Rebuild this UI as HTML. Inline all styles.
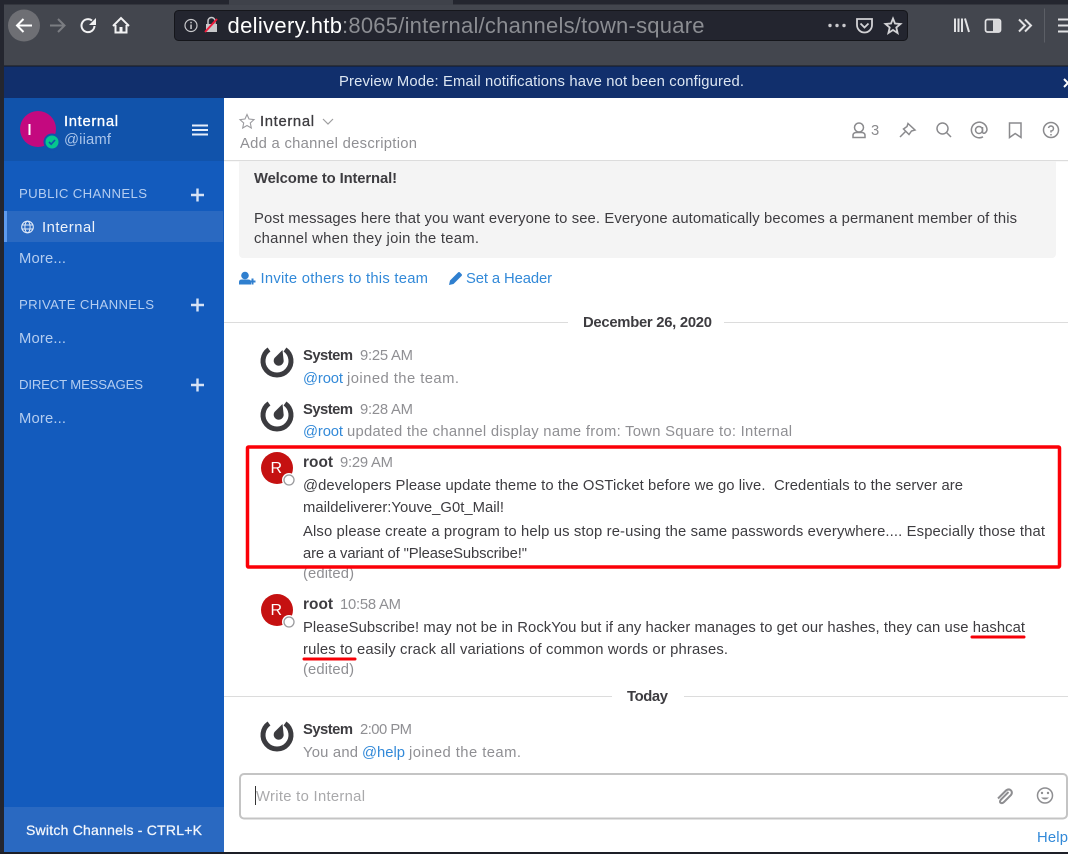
<!DOCTYPE html>
<html><head><meta charset="utf-8"><title>Internal</title>
<style>
html,body{margin:0;padding:0;background:#fff;width:1068px;height:854px;overflow:hidden}
svg{display:block}
text{font-family:"Liberation Sans",sans-serif;font-size:14.8px;white-space:pre}
.b{font-weight:700}
.t{fill:#3d3c40}
.g{fill:#8f8f93}
.l{fill:#3289d8}
.s{fill:#b4cdf0}
.h{font-size:13.2px}
</style></head><body>
<svg xmlns="http://www.w3.org/2000/svg" width="1068" height="854" viewBox="0 0 1068 854">
<defs>
<g id="mm"><path d="M-8 -11.500A14 14 0 1 0 8 -11.500" fill="none" stroke="#3b3b3f" stroke-width="5"/><path d="M5.500 -11L6.700 0A5 5 0 1 1 -2.500 -3Z" fill="#3b3b3f"/></g>
<g id="ro"><circle r="16" fill="#c51111"/><text x="-6.500" y="5" fill="#fff" style="font-size:16px">R</text><circle cx="12" cy="12" r="7" fill="#fff"/><circle cx="12" cy="12" r="5" fill="#fff" stroke="#9a9a9d" stroke-width="1.300"/></g>
</defs>

<!-- browser chrome -->
<rect width="1068" height="66" fill="#43464e"/>
<rect width="1068" height="4.500" fill="#24262f"/>
<rect x="229" width="224" height="5" fill="#3f424a"/>
<rect y="66" width="1068" height="32" fill="#112f6c"/>
<rect y="65.500" width="1068" height="1" fill="#16181e"/>
<rect x="0" y="0" width="4" height="854" fill="#24262f"/>
<circle cx="24" cy="25.500" r="16" fill="#6e6f74"/>
<path d="M32 25.500H17M23.500 19L17 25.500L23.500 32" fill="none" stroke="#fff" stroke-width="2"/>
<path d="M50 25.500H64M58 19L64.500 25.500L58 32" fill="none" stroke="#7b7d82" stroke-width="2"/>
<path d="M94.500 26A6.500 6.500 0 1 1 92 20.500" fill="none" stroke="#f2f2f3" stroke-width="2"/><path d="M96 18V25H89Z" fill="#f2f2f3"/>
<path d="M113 26L121 18L129 26M115.500 25V32.500H126.500V25" fill="none" stroke="#f2f2f3" stroke-width="2"/><rect x="119.500" y="27" width="3" height="5" fill="#f2f2f3"/>
<rect x="174.500" y="10.500" width="733" height="30" rx="4" fill="#23252f" stroke="#15161b"/>
<circle cx="191" cy="25.500" r="6" fill="none" stroke="#c9c9cc" stroke-width="1.200"/><rect x="190.300" y="24.500" width="1.500" height="4.500" fill="#c9c9cc"/><rect x="190.300" y="21.800" width="1.500" height="1.500" fill="#c9c9cc"/>
<rect x="206" y="24" width="11" height="8" fill="#c8c8cb"/><path d="M208 24V21A3.500 3.500 0 0 1 215 21V24" fill="none" stroke="#c8c8cb" stroke-width="1.500"/><path d="M205 32L217 19" stroke="#ee1c3c" stroke-width="2"/>
<text x="227.500" y="33" fill="#fff" textLength="114.500" style="font-size:22px">delivery.htb</text>
<text x="342" y="33" fill="#8b8d92" textLength="362.500" style="font-size:22px">:8065/internal/channels/town-square</text>
<circle cx="830" cy="25.500" r="1.700" fill="#c9c9cc"/><circle cx="837" cy="25.500" r="1.700" fill="#c9c9cc"/><circle cx="844" cy="25.500" r="1.700" fill="#c9c9cc"/>
<path d="M857 19H872V25A7.500 7.500 0 0 1 857 25Z" fill="none" stroke="#d2d2d5" stroke-width="1.800"/><path d="M860.500 23.500L864.500 27.500L868.500 23.500" fill="none" stroke="#d2d2d5" stroke-width="1.800"/>
<path d="M893 18.500L895 23.500L900.500 24L896.300 27.500L897.600 33L893 30L888.400 33L889.700 27.500L885.500 24L891 23.500Z" fill="none" stroke="#d2d2d5" stroke-width="1.800"/>
<path d="M955 18.500V32M958.500 18.500V32M962 18.500V32M965 18.500L969 32" fill="none" stroke="#e2e2e4" stroke-width="2"/>
<rect x="985.500" y="19.500" width="15" height="12.500" rx="2" fill="none" stroke="#e2e2e4" stroke-width="1.700"/><rect x="993" y="20" width="7" height="11.500" fill="#d8d8da"/>
<path d="M1019 19.500L1025 25.500L1019 31.500M1025 19.500L1031 25.500L1025 31.500" fill="none" stroke="#e2e2e4" stroke-width="2"/>
<rect x="1044" y="8.500" width="1" height="34" fill="#5c5f66"/>
<path d="M1058 19.500H1068M1058 25.500H1068M1058 31.500H1068" stroke="#e2e2e4" stroke-width="2"/>
<text x="339" y="86" fill="#dce6f2" textLength="405">Preview Mode: Email notifications have not been configured.</text>
<path d="M1064 79L1068 83L1064 87" fill="none" stroke="#fff" stroke-width="2"/>

<!-- sidebar -->
<rect x="4" y="98" width="220" height="754" fill="#135bbd"/>
<rect x="4" y="98" width="220" height="63" fill="#1153ab"/>
<circle cx="38" cy="129" r="18" fill="#c4097f"/>
<rect x="28.500" y="124" width="2" height="11" fill="#fff"/>
<circle cx="52" cy="142" r="8.500" fill="#1153ab"/><circle cx="52" cy="142" r="6.500" fill="#06c78e"/>
<path d="M49 142L51.200 144.200L55 140" fill="none" stroke="#1153ab" stroke-width="1.600"/>
<text x="64" y="126" fill="#fff" textLength="54" style="stroke:#fff;stroke-width:.3px">Internal</text>
<text x="64" y="144" fill="#a9c4ea" textLength="47">@iiamf</text>
<path d="M192 125.500H208M192 130H208M192 134.500H208" stroke="#e6eefa" stroke-width="2"/>
<text x="19" y="198" class="s h" textLength="128">PUBLIC CHANNELS</text>
<path d="M191 195H204M197.500 188.500V201.500" stroke="#d6e3f6" stroke-width="2.400"/>
<rect x="4" y="211" width="219" height="31" fill="#2a69c1"/><rect x="4" y="211" width="3" height="31" fill="#5d9bf0"/>
<circle cx="27.500" cy="227" r="5.800" fill="none" stroke="#dfe9f7" stroke-width="1.100"/><ellipse cx="27.500" cy="227" rx="2.600" ry="5.800" fill="none" stroke="#dfe9f7" stroke-width="1"/><path d="M22 225H33M22 229H33" stroke="#dfe9f7"/>
<text x="42" y="232" fill="#eef3fb" textLength="53">Internal</text>
<text x="19" y="263" class="s" textLength="47">More...</text>
<text x="19" y="309" class="s h" textLength="135">PRIVATE CHANNELS</text>
<path d="M191 305H204M197.500 298.500V311.500" stroke="#d6e3f6" stroke-width="2.400"/>
<text x="19" y="343" class="s" textLength="47">More...</text>
<text x="19" y="389" class="s h" textLength="124">DIRECT MESSAGES</text>
<path d="M191 385H204M197.500 378.500V391.500" stroke="#d6e3f6" stroke-width="2.400"/>
<text x="19" y="423" class="s" textLength="47">More...</text>
<rect x="4" y="807" width="220" height="45" fill="#2a69c1"/>
<text x="26" y="835" fill="#f2f6fc" textLength="176" style="font-size:14px;stroke:#f2f6fc;stroke-width:.25px">Switch Channels - CTRL+K</text>
<rect x="0" y="852" width="1068" height="2" fill="#1d1f27"/>

<!-- channel header -->
<path d="M247 114.500L249 119L254 119.600L250.300 123L251.300 128L247 125.500L242.700 128L243.700 123L240 119.600L245 119Z" fill="none" stroke="#9b9b9f" stroke-width="1.100"/>
<text x="260" y="126" class="t" textLength="54" style="stroke:#3d3c40;stroke-width:.3px">Internal</text>
<path d="M323 119L328 124L333 119" fill="none" stroke="#9d9d9f" stroke-width="1.200"/>
<text x="240" y="148" class="g" textLength="177">Add a channel description</text>
<rect x="224" y="160" width="844" height="1.200" fill="#dcdcdc"/>
<g fill="none" stroke="#8a8a8d" stroke-width="1.500">
<circle cx="859" cy="127.500" r="4.500"/><path d="M853 137.500V135.500Q853 132.500 856.500 132.500H861.500Q865 132.500 865 135.500V137.500Z"/>
<path d="M908 123.500L915 130L911.500 131L909 134.500L903.500 129L907 126.500ZM905.500 131.500L900 137"/>
<circle cx="942.500" cy="128.500" r="5.500"/><path d="M946.500 132.500L951 137"/>
<circle cx="979" cy="130" r="3.500"/><path d="M982.500 127V131.500Q982.500 134 985 133Q987 131.500 987 129.500A7.800 7.800 0 1 0 983 136.800"/>
<path d="M1009.500 123H1021V137.500L1015.200 133.500L1009.500 137.500Z"/>
<circle cx="1051" cy="130" r="7.500"/><path d="M1048.500 128A2.500 2.500 0 1 1 1051 131V132.500"/><path d="M1051 134V135.500"/>
</g>
<text x="871" y="135" fill="#8a8a8d" textLength="8">3</text>

<!-- welcome -->
<path d="M239 161H1056V254A4 4 0 0 1 1052 258H243A4 4 0 0 1 239 254Z" fill="#f4f4f4"/>
<text x="254" y="183" class="t b" textLength="143">Welcome to Internal!</text>
<text x="254" y="223" class="t" textLength="763">Post messages here that you want everyone to see. Everyone automatically becomes a permanent member of this</text>
<text x="254" y="243" class="t" textLength="225">channel when they join the team.</text>
<circle cx="245" cy="275.500" r="3.800" fill="#2f7fcf"/><path d="M239 284.500V282Q239 279.500 242 279.500H248Q251 279.500 251 282V284.500Z" fill="#2f7fcf"/><path d="M249.500 281.500H255.500M252.500 278.500V284.500" stroke="#2f7fcf" stroke-width="2"/>
<text x="260.500" y="283" class="l" textLength="167.500">Invite others to this team</text>
<path d="M449 285L450 280.500L458 272.500Q459 271.500 460 272.500L461.500 274Q462.500 275 461.500 276L453.500 284Z" fill="#2f7fcf"/>
<text x="466" y="283" class="l" textLength="86">Set a Header</text>
<rect x="224" y="322" width="344" height="1" fill="#dcdcdc"/><rect x="724" y="322" width="344" height="1" fill="#dcdcdc"/>
<text x="583" y="327" class="t b" textLength="129">December 26, 2020</text>

<!-- posts -->
<use href="#mm" x="277" y="361"/>
<text x="303" y="360" class="t b" textLength="50">System</text><text x="360" y="360" class="g" textLength="53">9:25 AM</text>
<text x="303" y="383" class="l" textLength="40">@root</text><text x="347" y="383" class="g" textLength="112">joined the team.</text>
<use href="#mm" x="277" y="415"/>
<text x="303" y="414" class="t b" textLength="50">System</text><text x="360" y="414" class="g" textLength="53">9:28 AM</text>
<text x="303" y="436" class="l" textLength="40">@root</text><text x="347" y="436" class="g" textLength="445">updated the channel display name from: Town Square to: Internal</text>

<use href="#ro" x="277" y="468"/>
<text x="303" y="467" class="t b" textLength="30" style="font-size:15.400px">root</text><text x="340" y="467" class="g" textLength="53">9:29 AM</text>
<text x="303" y="490" class="t" textLength="660">@developers Please update theme to the OSTicket before we go live.  Credentials to the server are</text>
<text x="303" y="512" class="t" textLength="201">maildeliverer:Youve_G0t_Mail!</text>
<text x="303" y="536" class="t" textLength="742">Also please create a program to help us stop re-using the same passwords everywhere.... Especially those that</text>
<text x="303" y="558" class="t" textLength="224">are a variant of "PleaseSubscribe!"</text>
<text x="303" y="578" class="g" textLength="51">(edited)</text>
<rect x="247.500" y="447" width="812" height="120" rx="1" fill="none" stroke="#fb0007" stroke-width="3.500"/>

<use href="#ro" x="277" y="610"/>
<text x="303" y="609" class="t b" textLength="30" style="font-size:15.400px">root</text><text x="340" y="609" class="g" textLength="61">10:58 AM</text>
<text x="303" y="632" class="t" textLength="722">PleaseSubscribe! may not be in RockYou but if any hacker manages to get our hashes, they can use hashcat</text>
<text x="303" y="654" class="t" textLength="425">rules to easily crack all variations of common words or phrases.</text>
<text x="303" y="674" class="g" textLength="51">(edited)</text>
<path d="M972 637H1024M304 659H355" stroke="#f60007" stroke-width="3" stroke-linecap="round"/>

<rect x="224" y="696" width="388" height="1" fill="#dcdcdc"/><rect x="684" y="696" width="384" height="1" fill="#dcdcdc"/>
<text x="627" y="701" class="t b" textLength="41">Today</text>
<use href="#mm" x="277" y="735"/>
<text x="303" y="734" class="t b" textLength="50">System</text><text x="360" y="734" class="g" textLength="52">2:00 PM</text>
<text x="303" y="757" class="g" textLength="55">You and</text><text x="362" y="757" class="l" textLength="43">@help</text><text x="409" y="757" class="g" textLength="112">joined the team.</text>

<!-- input -->
<rect x="240" y="774" width="827" height="44.500" rx="4" fill="#fff" stroke="#c4c4c4" stroke-width="2"/>
<rect x="255" y="786" width="1" height="19" fill="#333"/>
<text x="256" y="801" fill="#a9a9ab" textLength="109">Write to Internal</text>
<path d="M1008.500 792L1001 799.500Q999 802 1001 803Q1002.500 803.500 1004 802L1011 795Q1013 792 1010.500 790Q1008 788.500 1005.500 791L998 798.500" fill="none" stroke="#8e8e91" stroke-width="2"/>
<circle cx="1045" cy="795.500" r="7.500" fill="none" stroke="#8e8e91" stroke-width="1.500"/><circle cx="1042" cy="793" r="1.200" fill="#8e8e91"/><circle cx="1048" cy="793" r="1.200" fill="#8e8e91"/><path d="M1041 797.500Q1045 801.500 1049 797.500Z" fill="#8e8e91"/>
<text x="1037" y="842" class="l" textLength="31">Help</text>
</svg>
</body></html>
